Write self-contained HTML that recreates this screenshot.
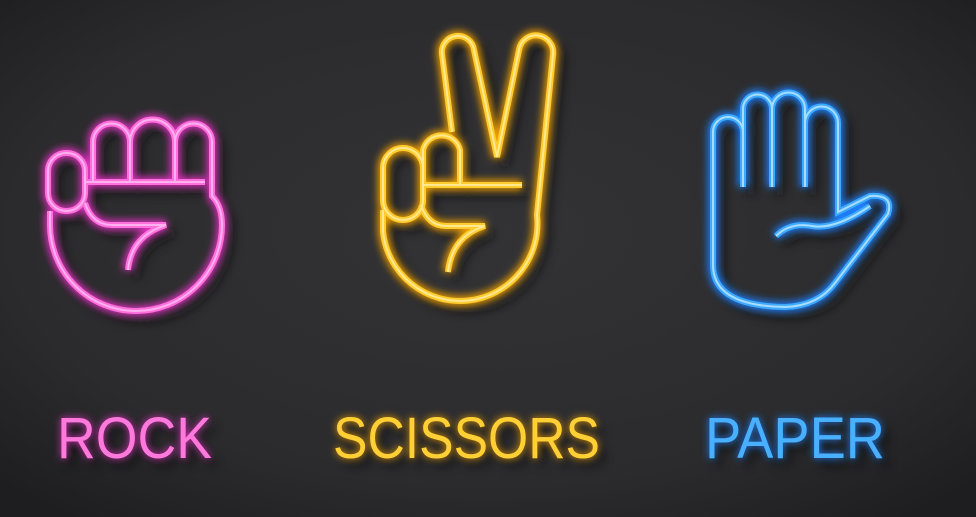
<!DOCTYPE html>
<html><head><meta charset="utf-8"><style>
html,body{margin:0;padding:0;width:976px;height:517px;overflow:hidden;background:#2a2a2c}
svg{display:block}
</style></head><body>
<svg width="976" height="517" viewBox="0 0 976 517" xmlns="http://www.w3.org/2000/svg">
<defs>
<radialGradient id="bg" cx="50%" cy="45%" r="70%">
<stop offset="0" stop-color="#333335"/><stop offset="0.7" stop-color="#2b2b2d"/><stop offset="1" stop-color="#1e1e20"/>
</radialGradient>
<filter id="glow" x="-20%" y="-20%" width="140%" height="140%"><feGaussianBlur stdDeviation="4"/></filter>
<filter id="sh" x="-20%" y="-20%" width="140%" height="140%"><feGaussianBlur stdDeviation="5"/></filter>
</defs>
<rect width="976" height="517" fill="url(#bg)"/>

<g fill="none" stroke-linecap="round" stroke-linejoin="round">
<g id="rp">
<rect x="48" y="153" width="37" height="58" rx="18"/>
<path d="M93,182 V142 a18.5,18.5 0 0 1 37,0 V182 M130,142 a22.5,22.5 0 0 1 45,0 V182 M175,142 a18.5,18.5 0 0 1 37,0 V196 Q222,206 222,225 A86,86 0 0 1 50,225 V211 M85,182 H205"/>
<path d="M85,203 Q92,225 112,225 H166 Q131,236 128,270"/>
</g>
</g>
<use href="#rp" transform="translate(8,8)" stroke="#111" stroke-width="8" opacity="0.6" filter="url(#sh)" fill="none"/>
<use href="#rp" stroke="#e030c0" stroke-width="10" filter="url(#glow)" fill="none"/>
<use href="#rp" stroke="#ff70dc" stroke-width="6" fill="none"/>
<use href="#rp" stroke="#ffb0ee" stroke-width="2" fill="none"/>

<g fill="none" stroke-linecap="round" stroke-linejoin="round">
<g id="sp">
<path d="M452,132 L442,54 a16,16 0 0 1 32,-4 L497,157 L519,50 a17,17 0 0 1 34,5 L537,215 A77,77 0 0 1 383,232 V210"/>
<rect x="383" y="148" width="40" height="72" rx="20"/>
<path d="M423,185 V150 a19,19 0 0 1 37,0 V185"/>
<path d="M423,185 H522"/>
<path d="M421,205 Q428,226 446,226 H485 Q452,236 448,272"/>
</g>
</g>
<use href="#sp" transform="translate(8,8)" stroke="#111" stroke-width="8" opacity="0.6" filter="url(#sh)" fill="none"/>
<use href="#sp" stroke="#f0a000" stroke-width="10" filter="url(#glow)" fill="none"/>
<use href="#sp" stroke="#ffcc30" stroke-width="6" fill="none"/>
<use href="#sp" stroke="#ffe890" stroke-width="2" fill="none"/>

<g fill="none" stroke-linecap="round" stroke-linejoin="round">
<g id="pp">
<path d="M713,265 V132 a15,15 0 0 1 30,0 V187 M743,187 V109 a14.5,14.5 0 0 1 29,0 V187 M772,187 V109 a16.5,16.5 0 0 1 33,0 V187 M805,187 V123 a16.5,16.5 0 0 1 33,0 V212 L870,196 Q894,194 888,214 L835,283 Q818,306 785,307 Q713,306 713,265"/>
<path d="M776,236 Q790,222 812,226 Q835,230 870,206"/>
</g>
</g>
<use href="#pp" transform="translate(8,8)" stroke="#111" stroke-width="8" opacity="0.6" filter="url(#sh)" fill="none"/>
<use href="#pp" stroke="#1a80ff" stroke-width="10" filter="url(#glow)" fill="none"/>
<use href="#pp" stroke="#3eaaff" stroke-width="6" fill="none"/>
<use href="#pp" stroke="#a8dcff" stroke-width="2" fill="none"/>

<g font-family="Liberation Sans, sans-serif" font-size="58">
<g fill="#111" opacity="0.6" filter="url(#sh)" transform="translate(7,8)">
<text x="57" y="458" textLength="155" lengthAdjust="spacingAndGlyphs">ROCK</text>
<text x="333" y="458" textLength="267" lengthAdjust="spacingAndGlyphs">SCISSORS</text>
<text x="705" y="458" textLength="180" lengthAdjust="spacingAndGlyphs">PAPER</text>
</g>
<text x="57" y="458" textLength="155" lengthAdjust="spacingAndGlyphs" fill="#e030c0" filter="url(#glow)">ROCK</text>
<text x="333" y="458" textLength="267" lengthAdjust="spacingAndGlyphs" fill="#f0a000" filter="url(#glow)">SCISSORS</text>
<text x="705" y="458" textLength="180" lengthAdjust="spacingAndGlyphs" fill="#1a80ff" filter="url(#glow)">PAPER</text>
<text x="57" y="458" textLength="155" lengthAdjust="spacingAndGlyphs" fill="#ff78dc">ROCK</text>
<text x="333" y="458" textLength="267" lengthAdjust="spacingAndGlyphs" fill="#ffd035">SCISSORS</text>
<text x="705" y="458" textLength="180" lengthAdjust="spacingAndGlyphs" fill="#48b0ff">PAPER</text>
</g>
</svg>
</body></html>
